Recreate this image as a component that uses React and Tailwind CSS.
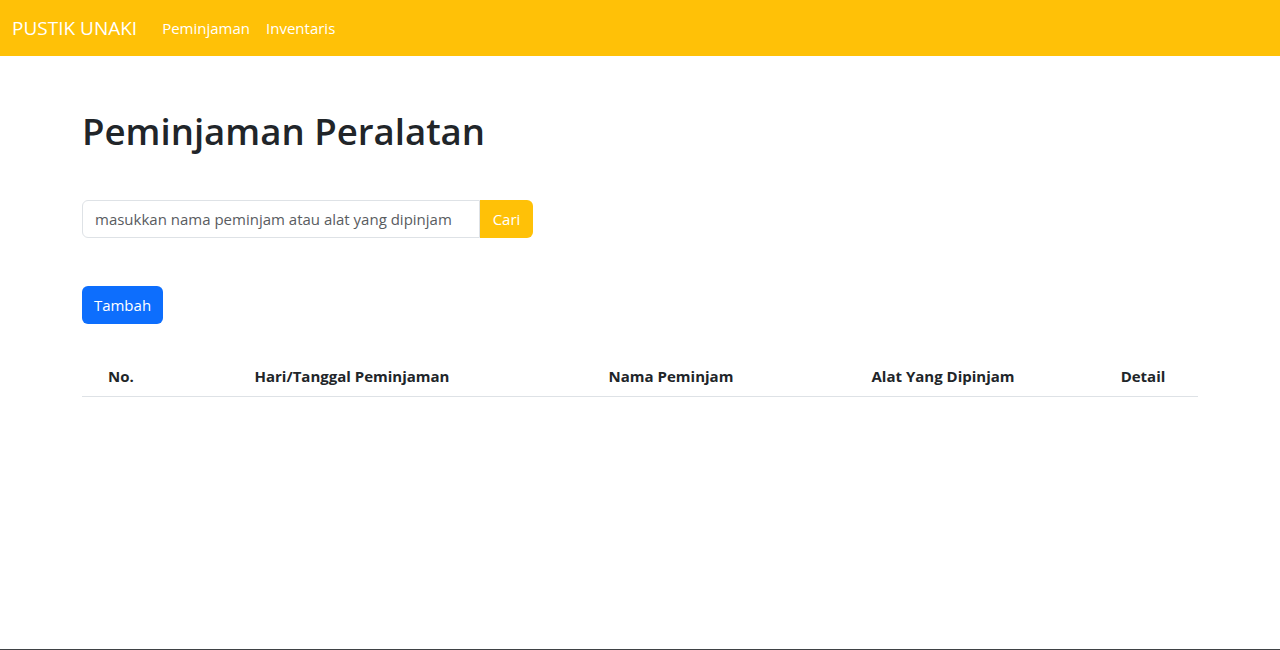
export default function App() {
  const columns = [
    { label: "No.", width: "w-[78px]" },
    { label: "Hari/Tanggal Peminjaman", width: "w-[384px]" },
    { label: "Nama Peminjam", width: "w-[254px]" },
    { label: "Alat Yang Dipinjam", width: "w-[290px]" },
    { label: "Detail", width: "w-[110px]" },
  ];

  return (
    <div
      className="min-h-[650px] bg-white border-b border-[#3f4245] text-[#212529]"
      style={{ fontFamily: '"Segoe UI", "Open Sans", "Noto Sans", sans-serif' }}
    >
      {/* Navbar */}
      <nav className="h-14 bg-[#ffc107] flex items-center px-3">
        <a href="#" className="text-white text-[19px] mr-[17px] py-[5px] leading-[30px]">
          PUSTIK UNAKI
        </a>
        <div className="flex">
          <a href="#" className="text-white text-[15px] px-2 py-2">
            Peminjaman
          </a>
          <a href="#" className="text-white text-[15px] px-2 py-2">
            Inventaris
          </a>
        </div>
      </nav>

      {/* Content */}
      <div className="w-[1116px] mx-auto flex flex-col">
        <h1 className="mt-[51px] text-[36.6px] leading-[48px] font-semibold">Peminjaman Peralatan</h1>

        <div className="mt-[45px] flex w-[451px] h-[38px]">
          <input
            type="text"
            placeholder="masukkan nama peminjam atau alat yang dipinjam"
            className="flex-1 min-w-0 border border-[#dee2e6] rounded-l-md px-3 text-[15px] text-[#212529] placeholder:text-[#595c5f] outline-none"
          />
          <button className="w-[53px] bg-[#ffc107] text-white text-[15px] rounded-r-md">Cari</button>
        </div>

        <div className="mt-12">
          <button className="h-[38px] w-[81px] bg-[#0d6efd] text-white text-[15px] rounded-md">Tambah</button>
        </div>

        <div className="mt-8 flex border-b border-[#dee2e6]">
          {columns.map((col) => (
            <div key={col.label} className={`${col.width} text-center font-bold text-[15px] leading-6 py-2`}>
              {col.label}
            </div>
          ))}
        </div>
      </div>
    </div>
  );
}
